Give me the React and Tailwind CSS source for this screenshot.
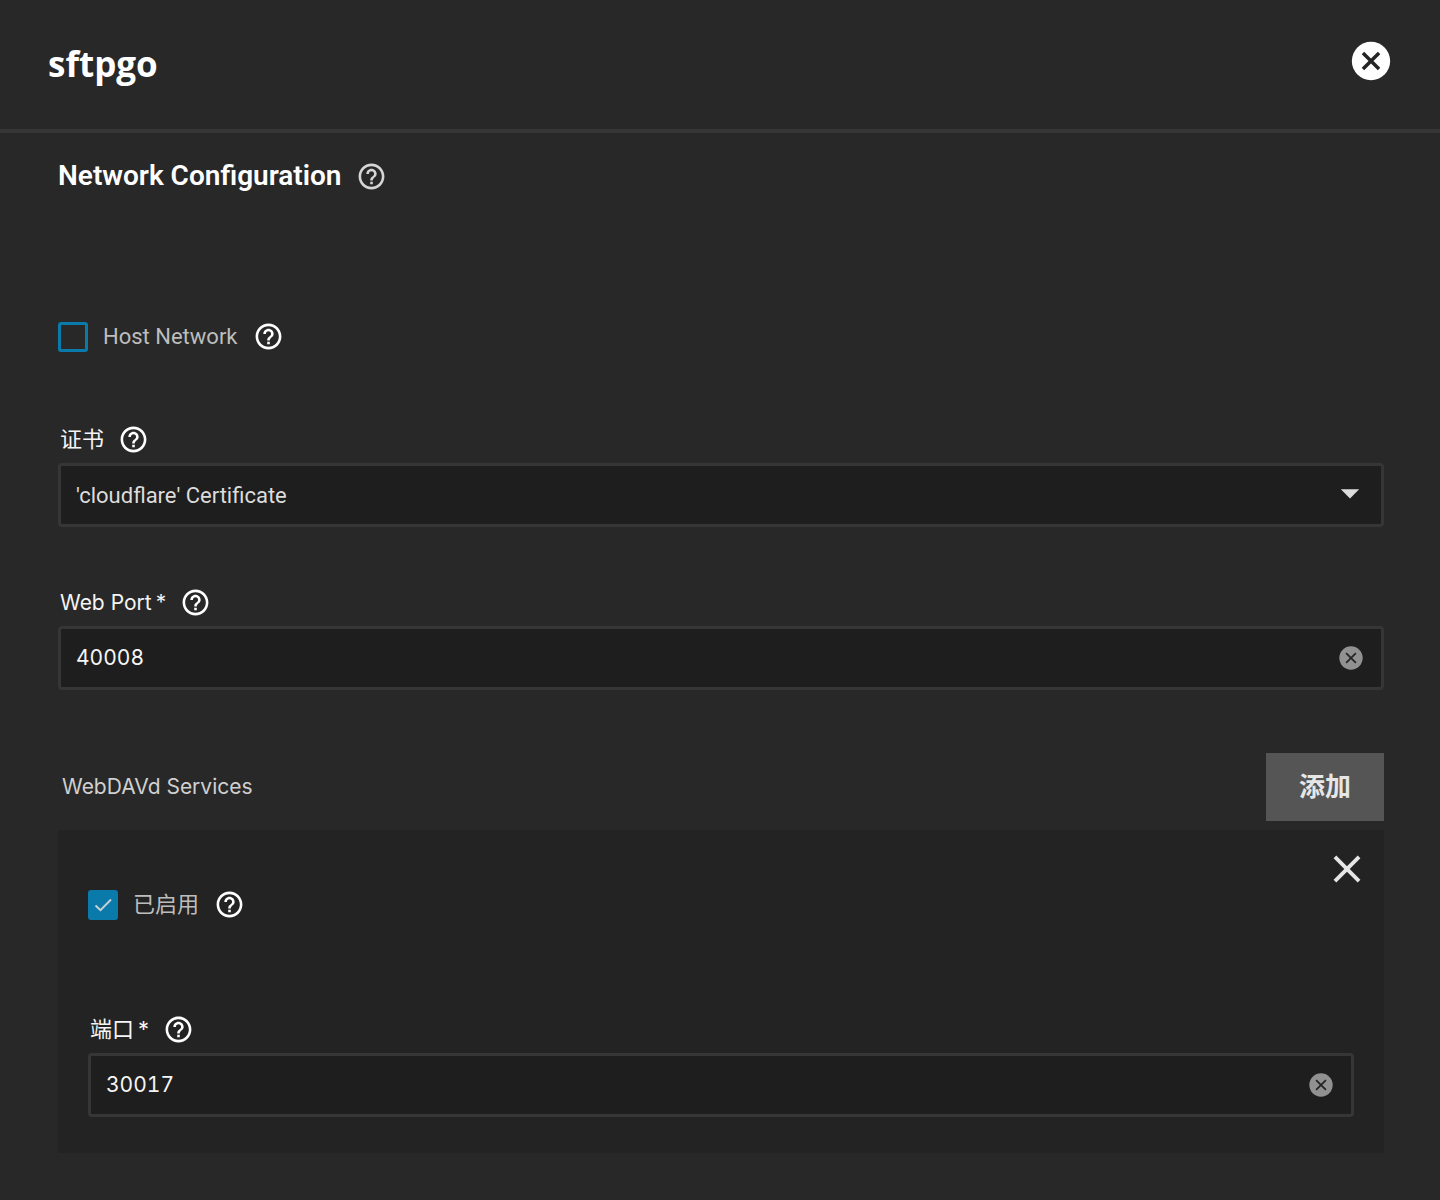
import { MdArrowDropDown, MdClose, MdHelpOutline } from "react-icons/md"

const HelpButton = ({ label, className = "text-white" }) => (
  <button type="button" aria-label={label} className={`shrink-0 ${className}`}>
    <MdHelpOutline className="size-[31px]" />
  </button>
)

const CancelIcon = ({ className, strokeWidth = 2 }) => (
  <svg viewBox="0 0 24 24" className={className} aria-hidden="true">
    <circle cx="12" cy="12" r="10" fill="currentColor" />
    <path d="M7.800 7.800l8.400 8.400M16.200 7.800l-8.400 8.400" stroke="#242424" strokeWidth={strokeWidth} fill="none" />
  </svg>
)

const Checkbox = ({ id, label, defaultChecked }) => (
  <div className="flex items-center">
    <span className="relative size-[30px] shrink-0">
      <input
        id={id}
        type="checkbox"
        defaultChecked={defaultChecked}
        className="peer block size-full appearance-none rounded-[3px] border-3 border-[#0a7aab] checked:bg-[#0a7aab]"
      />
      <svg
        viewBox="0 0 30 30"
        className="pointer-events-none absolute inset-0 hidden size-full peer-checked:block"
        aria-hidden="true"
      >
        <path d="M7.500 15.500l5 4.700L23 9.500" fill="none" stroke="#c8d0d4" strokeWidth="2" />
      </svg>
    </span>
    <label htmlFor={id} className="ml-[15px] mr-[15px] text-[22px] leading-[30px] text-[#bdbdbd]">
      {label}
    </label>
    <HelpButton label={`${label} help`} />
  </div>
)

const FieldLabel = ({ id, label, required, textSize = "text-[22px]" }) => (
  <div className="mb-2 flex items-center pl-0.5">
    <label
      htmlFor={id}
      className={`mr-[14px] font-['Inter','Noto_Sans_CJK_SC',sans-serif] leading-[31px] text-[#f5f5f5] ${textSize}`}
    >
      {label}
      {required && <span className="ml-1">*</span>}
    </label>
    <HelpButton label={`${label} help`} />
  </div>
)

const PortField = ({ id, label, textSize, defaultValue }) => (
  <div>
    <FieldLabel id={id} label={label} textSize={textSize} required />
    <div className="flex h-16 items-center rounded-[4px] border-3 border-[#363636] bg-[#1e1e1e] pl-[15px] pr-4">
      <input
        id={id}
        type="text"
        defaultValue={defaultValue}
        className="min-w-0 flex-1 bg-transparent font-['Inter',sans-serif] text-[21px] tabular-nums text-[#f5f5f5] outline-none"
      />
      <button type="button" aria-label="Clear" className="text-[#919191]">
        <CancelIcon className="size-7" strokeWidth={1.5} />
      </button>
    </div>
  </div>
)

const App = () => (
  <div className="min-h-screen bg-[#282828] font-['Roboto','Noto_Sans_CJK_SC',sans-serif]">
    <header className="flex h-[133px] items-start justify-between border-b-4 border-[#363636] pl-12 pr-[46px]">
      <h1 className="mt-[37px] font-['Open_Sans',sans-serif] text-[35px] font-bold leading-[54px] text-white">sftpgo</h1>
      <button type="button" aria-label="Close" className="mt-[38px] text-white">
        <CancelIcon className="size-[46px]" strokeWidth={1.8} />
      </button>
    </header>

    <main className="pb-[47px] pl-[58px] pr-14 pt-[26px]">
      <div className="flex items-center">
        <h2 className="mr-[14px] text-[28px] font-semibold leading-[34px] text-white">Network Configuration</h2>
        <HelpButton label="Network Configuration help" className="text-[#d6d6d6]" />
      </div>

      <div className="mt-32">
        <Checkbox id="host-network" label="Host Network" />
      </div>

      <div className="mt-[72px]">
        <FieldLabel id="certificate" label="证书" />
        <div className="relative">
          <select
            id="certificate"
            className="block h-16 w-full appearance-none rounded-[4px] border-3 border-[#363636] bg-[#1e1e1e] px-[15px] text-[22px] text-[#dcdcdc]"
          >
            <option>'cloudflare' Certificate</option>
          </select>
          <MdArrowDropDown className="pointer-events-none absolute right-3 top-2 size-[44px] text-[#dcdcdc]" />
        </div>
      </div>

      <div className="mt-[60px]">
        <PortField id="web-port" label="Web Port" textSize="text-[21px]" defaultValue="40008" />
      </div>

      <section className="mt-[63px]">
        <div className="flex h-[68px] items-center justify-between">
          <h3 className="ml-1 font-['Inter',sans-serif] text-[21px] text-[#d0d0d0]">WebDAVd Services</h3>
          <button type="button" className="h-full bg-[#555555] px-[33px] text-[26px] font-bold text-[#e6e6e6]">
            添加
          </button>
        </div>

        <div className="mt-[9px] bg-[#232323] px-[30px] pb-9 pt-4">
          <div className="flex h-[43px] items-start justify-end">
            <button type="button" aria-label="Remove" className="-mr-4 text-[#e6e6e6]">
              <MdClose className="size-[46px]" />
            </button>
          </div>
          <Checkbox id="webdav-enabled" label="已启用" defaultChecked />
          <div className="mt-[94px]">
            <PortField id="webdav-port" label="端口" defaultValue="30017" />
          </div>
        </div>
      </section>
    </main>
  </div>
)

export default App
